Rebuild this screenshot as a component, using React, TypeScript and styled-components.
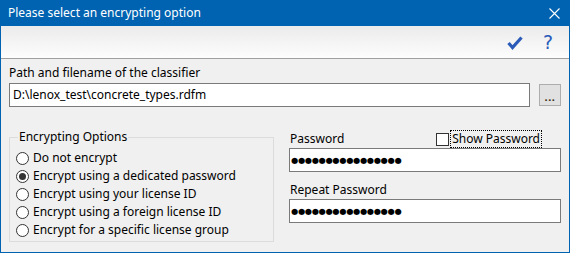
import React from 'react'
import styled, { createGlobalStyle } from 'styled-components'

const GlobalStyle = createGlobalStyle`
    html, body {
        margin: 0;
        padding: 0;
        background: #f0f0f0;
    }
    * {
        box-sizing: border-box;
    }
`

const options = [
    'Do not encrypt',
    'Encrypt using a dedicated password',
    'Encrypt using your license ID',
    'Encrypt using a foreign license ID',
    'Encrypt for a specific license group'
]

const App: React.FC = () => {
    const selected = 1
    const secret = '●'.repeat(16)

    return (
        <>
            <GlobalStyle />
            <Window>
                <TitleBar>
                    <Title>Please select an encrypting option</Title>
                    <CloseButton>
                        <svg width="11" height="11" viewBox="0 0 11 11">
                            <path d="M0.5 0.5 L10.5 10.5 M10.5 0.5 L0.5 10.5" stroke="white" strokeWidth="1.1" fill="none" />
                        </svg>
                    </CloseButton>
                </TitleBar>
                <Toolbar>
                    <ToolIcon>
                        <svg width="16" height="14" viewBox="0 0 16 14">
                            <path d="M1.5 7 L5.5 11.5 L14.5 1.5" stroke="#2a5bb8" strokeWidth="3.2" fill="none" strokeLinejoin="miter" />
                        </svg>
                    </ToolIcon>
                    <HelpIcon>?</HelpIcon>
                </Toolbar>
                <Content>
                    <Label>Path and filename of the classifier</Label>
                    <PathRow>
                        <TextBox>D:\lenox_test\concrete_types.rdfm</TextBox>
                        <BrowseButton>...</BrowseButton>
                    </PathRow>
                    <Columns>
                        <GroupBox>
                            <Legend>Encrypting Options</Legend>
                            {options.map((opt, i) => (
                                <RadioRow key={opt}>
                                    <Radio $checked={i === selected} />
                                    <span>{opt}</span>
                                </RadioRow>
                            ))}
                        </GroupBox>
                        <PasswordColumn>
                            <LabelRow>
                                <Label>Password</Label>
                                <CheckRow>
                                    <CheckBox />
                                    <FocusText>Show Password</FocusText>
                                </CheckRow>
                            </LabelRow>
                            <PasswordBox>{secret}</PasswordBox>
                            <RepeatLabel>Repeat Password</RepeatLabel>
                            <PasswordBox>{secret}</PasswordBox>
                        </PasswordColumn>
                    </Columns>
                </Content>
            </Window>
        </>
    )
}

const Window = styled.div`
    width: 570px;
    height: 253px;
    border: 1px solid #0063b1;
    border-top: none;
    background: #f0f0f0;
    font-family: 'Noto Sans', 'Open Sans', sans-serif;
    font-size: 12px;
    color: #000;
    display: flex;
    flex-direction: column;
`

const TitleBar = styled.div`
    height: 26px;
    margin: 0 -1px;
    background: #0063b1;
    display: flex;
    align-items: center;
    justify-content: space-between;
    padding: 0 0 0 8px;
`

const Title = styled.span`
    color: #fff;
    font-size: 12px;
    line-height: 16px;
`

const CloseButton = styled.div`
    width: 46px;
    height: 26px;
    display: flex;
    align-items: center;
    justify-content: center;
    margin-right: -7px;
`

const Toolbar = styled.div`
    height: 33px;
    background: linear-gradient(#ebebeb, #fdfdfd);
    border-bottom: 1px solid #a0a0a0;
    display: flex;
    align-items: center;
    justify-content: flex-end;
    gap: 20px;
    padding-right: 16px;
`

const ToolIcon = styled.div`
    display: flex;
    padding-top: 2px;
`

const HelpIcon = styled.span`
    color: #2a5bb8;
    font-family: 'DejaVu Sans', sans-serif;
    font-size: 19px;
    line-height: 20px;
`

const Content = styled.div`
    padding: 6px 8px 0 8px;
    display: flex;
    flex-direction: column;
`

const Label = styled.div`
    line-height: 16px;
    color: #000;
`

const PathRow = styled.div`
    display: flex;
    align-items: center;
    gap: 9px;
    margin-top: 2px;
`

const TextBox = styled.div`
    width: 521px;
    height: 24px;
    border: 1px solid #7a7a7a;
    background: #fff;
    padding: 0 3px;
    line-height: 22px;
`

const BrowseButton = styled.div`
    width: 22px;
    height: 22px;
    border: 1px solid #adadad;
    background: #e1e1e1;
    color: #3a2a10;
    font-weight: bold;
    font-size: 11px;
    line-height: 24px;
    text-align: center;
    letter-spacing: 0.5px;
`

const Columns = styled.div`
    display: grid;
    grid-template-columns: 265px 272px;
    column-gap: 15px;
    margin-top: 22px;
`

const GroupBox = styled.fieldset`
    margin: 0;
    margin-top: 1px;
    height: 112px;
    border: 1px solid #dcdcdc;
    padding: 5px 6px 0 6px;
    display: flex;
    flex-direction: column;
`

const Legend = styled.legend`
    padding: 0 1px;
    margin-left: 2px;
    line-height: 14px;
`

const RadioRow = styled.div`
    display: flex;
    align-items: center;
    gap: 4px;
    height: 18px;
    line-height: 16px;
`

const Radio = styled.span<{ $checked: boolean }>`
    width: 13px;
    height: 13px;
    border-radius: 50%;
    border: 1px solid #333;
    background: #fff;
    display: flex;
    align-items: center;
    justify-content: center;
    &::after {
        content: '';
        width: 7px;
        height: 7px;
        border-radius: 50%;
        background: ${p => (p.$checked ? '#333' : 'transparent')};
    }
`

const PasswordColumn = styled.div`
    display: flex;
    flex-direction: column;
    padding-top: 1px;
`

const LabelRow = styled.div`
    display: flex;
    justify-content: space-between;
    align-items: center;
    height: 18px;
    padding-left: 1px;
`

const CheckRow = styled.div`
    display: flex;
    align-items: center;
    gap: 2px;
    margin-right: 20px;
`

const CheckBox = styled.span`
    width: 13px;
    height: 13px;
    border: 1px solid #333;
    background: #fff;
`

const FocusText = styled.span`
    outline: 1px dotted #000;
    padding: 0 1px;
    line-height: 16px;
`

const PasswordBox = styled.div`
    height: 24px;
    border: 1px solid #7a7a7a;
    background: #fff;
    padding: 0 1px;
    font-family: 'DejaVu Sans', sans-serif;
    font-size: 8.2px;
    letter-spacing: -0.25px;
    line-height: 22px;
    color: #000;
`

const RepeatLabel = styled.div`
    line-height: 16px;
    margin-top: 10px;
    margin-bottom: 1px;
    padding-left: 1px;
`

export default App
